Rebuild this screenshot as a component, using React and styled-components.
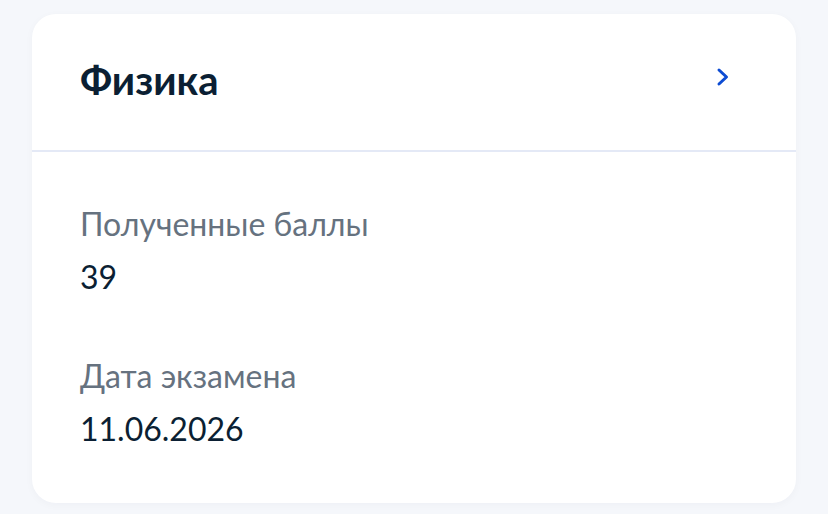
import styled, { createGlobalStyle } from "styled-components";

const GlobalStyle = createGlobalStyle`
  html, body {
    margin: 0;
    padding: 0;
    background: #f5f7fb;
    font-family: Lato, "Noto Sans", sans-serif;
  }
`;

const Page = styled.div`
  padding: 14px 32px 12px 32px;
  box-sizing: border-box;
`;

const Card = styled.div`
  background: #ffffff;
  border-radius: 24px;
  overflow: hidden;
  box-shadow: 0 2px 8px rgba(11, 31, 51, 0.03);
`;

const Header = styled.div`
  display: flex;
  align-items: center;
  justify-content: space-between;
  height: 138px;
  padding: 0 66px 4px 48px;
  border-bottom: 2px solid #e4e9f6;
  box-sizing: border-box;
`;

const Title = styled.h2`
  margin: 0;
  font-size: 40px;
  line-height: 48px;
  font-weight: 700;
  color: #0b1f33;
`;

const Chevron = styled.svg`
  width: 14px;
  height: 20px;
  margin-top: -6px;
  color: #0d4cd3;
`;

const Body = styled.div`
  padding: 48px 48px 50px;
  display: flex;
  flex-direction: column;
  gap: 51px;
`;

const Field = styled.div`
  display: flex;
  flex-direction: column;
  gap: 5px;
`;

const Label = styled.span`
  font-size: 32px;
  line-height: 48px;
  color: #66727f;
`;

const Value = styled.span`
  font-size: 32px;
  line-height: 48px;
  color: #0b1f33;
`;

const fields = [
  { label: "Полученные баллы", value: "39" },
  { label: "Дата экзамена", value: "11.06.2026" },
];

export default function App() {
  return (
    <>
      <GlobalStyle />
      <Page>
        <Card>
          <Header>
            <Title>Физика</Title>
            <Chevron viewBox="0 0 14 20" fill="none">
              <path
                d="M3 3l7.5 7L3 17"
                stroke="currentColor"
                strokeWidth="3"
                strokeLinecap="round"
                strokeLinejoin="round"
              />
            </Chevron>
          </Header>
          <Body>
            {fields.map((f) => (
              <Field key={f.label}>
                <Label>{f.label}</Label>
                <Value>{f.value}</Value>
              </Field>
            ))}
          </Body>
        </Card>
      </Page>
    </>
  );
}
